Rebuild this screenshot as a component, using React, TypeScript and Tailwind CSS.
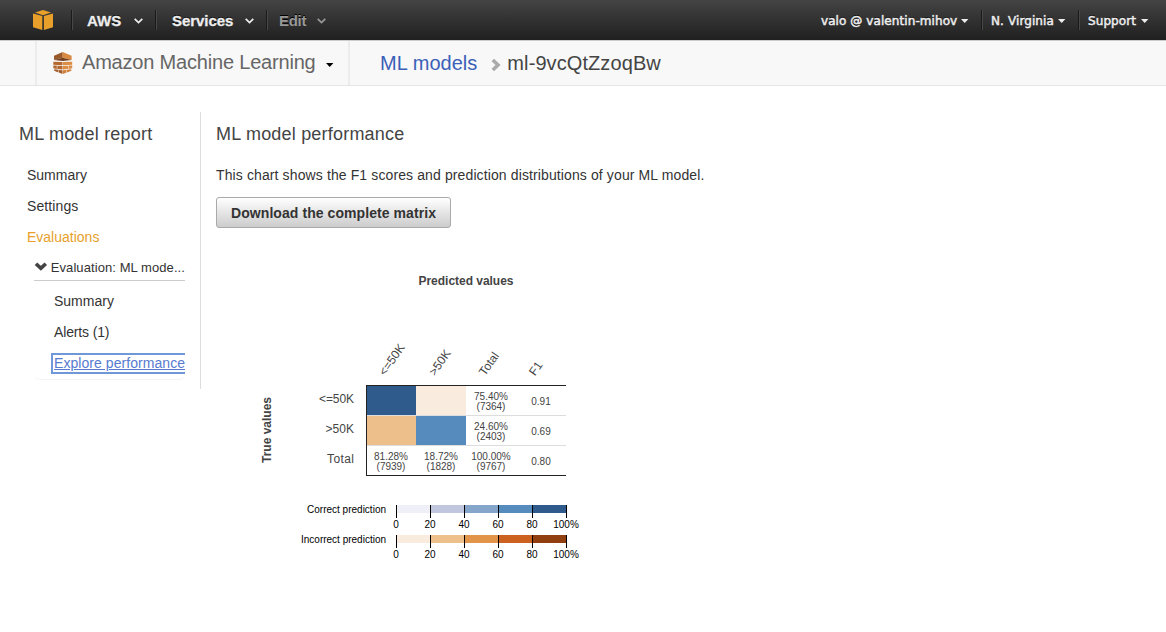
import React from "react";

const Chevron = ({ className }: { className: string }) => (
  <svg className={className} width="9" height="6" viewBox="0 0 9 6" fill="none" stroke="currentColor" strokeWidth="1.7">
    <path d="M0.7 0.8 L4.5 4.5 L8.3 0.8" />
  </svg>
);

const Caret = ({ className }: { className: string }) => (
  <svg className={className} width="8" height="4" viewBox="0 0 8 4" fill="currentColor">
    <path d="M0 0H7.4L3.7 4Z" />
  </svg>
);

const Divider = () => <div className="h-5 w-0.5 shrink-0 border-l border-l-[#1a1a1a] border-r border-r-[#484848]" />;

const CubeLogo = () => (
  <svg width="20" height="20" viewBox="0 0 20 20" fill="#e8a02b" className="shrink-0">
    <path d="M10 0L18 2.5L10 5.2L2 2.5Z" />
    <path d="M0 3.6L9.3 6V20L0 17.3Z" />
    <path d="M20 3.6L10.9 6V20L20 17.3Z" />
  </svg>
);

const LearningLogo = () => (
  <svg width="20" height="22" viewBox="0 0 20 22" className="shrink-0">
    <path d="M9.7 0L1 3.8V8L9.7 5.8Z" fill="#9a592b" />
    <path d="M9.7 0L18.6 3.8V8L9.7 5.8Z" fill="#d98a42" />
    <path d="M1 8L9.7 5.8L18.6 8L9.7 9Z" fill="#74401f" />
    <path d="M0.3 9.7L9.5 10V13.2L0.3 12.8Z" fill="#b4682f" />
    <path d="M19.2 9.7L9.9 10V13.2L19.2 12.8Z" fill="#dc8c43" />
    <path d="M0.3 13.6H3.8V16.9L0.3 16.3ZM4.3 13.7L9.5 14V17.6L4.3 17Z" fill="#b4682f" />
    <path d="M19.2 13.6H15.6V16.9L19.2 16.3ZM15.1 13.7L9.9 14V17.6L15.1 17Z" fill="#dc8c43" />
    <path d="M1.2 17.3L5.4 17.8V20.4L1.2 18.7ZM5.9 17.9L9.5 18.3V22L5.9 20.6Z" fill="#a25a28" />
    <path d="M18.3 17.3L14 17.8V20.4L18.3 18.7ZM13.5 17.9L9.9 18.3V22L13.5 20.6Z" fill="#d07f39" />
  </svg>
);

const columns = ["<=50K", ">50K", "Total", "F1"];

const cells = [
  { x: 391, y: 400, pct: "81.28%", count: "(7939)", row: 2 },
  { x: 441, y: 400, pct: "18.72%", count: "(1828)", row: 2 },
  { x: 491, y: 400, pct: "75.40%", count: "(7364)", row: 0 },
  { x: 491, y: 400, pct: "24.60%", count: "(2403)", row: 1 },
  { x: 491, y: 400, pct: "100.00%", count: "(9767)", row: 2 },
];

const scales = [
  { label: "Correct prediction", x: 307, length: 79, y: 505, colors: ["#efeff7", "#c0c6de", "#86a5cb", "#568bbd", "#2f5a8c"] },
  { label: "Incorrect prediction", x: 301, length: 85, y: 535, colors: ["#f9ecdf", "#edc08b", "#e29549", "#cb601f", "#913f10"] },
];

const ticks = ["0", "20", "40", "60", "80", "100%"];

const Matrix = () => (
  <svg width="360" height="300" viewBox="240 270 360 300" className="block" fill="#444">
    <text x="466" y="285" fontSize="12" fontWeight="bold" textAnchor="middle" textLength="95">Predicted values</text>
    <text transform="translate(271 430) rotate(-90)" fontSize="12" fontWeight="bold" textAnchor="middle" textLength="66">True values</text>
    {columns.map((c, i) => (
      <text key={c} transform={`translate(${385 + i * 50} 376.5) rotate(-55)`} fontSize="12">{c}</text>
    ))}
    {["<=50K", ">50K", "Total"].map((r, i) => (
      <text key={r} x="354" y={403 + i * 30} fontSize="12" textAnchor="end" textLength={[35, 28.5, 27][i]}>{r}</text>
    ))}
    <g shapeRendering="crispEdges">
      <rect x="366" y="386" width="50" height="29" fill="#2f5a8c" />
      <rect x="416" y="386" width="50" height="29" fill="#f9ecdf" />
      <rect x="366" y="416" width="50" height="29" fill="#edc08b" />
      <rect x="416" y="416" width="50" height="29" fill="#568bbd" />
      <rect x="367" y="415" width="199" height="1" fill="#ddd" />
      <rect x="367" y="445" width="199" height="1" fill="#ddd" />
      <rect x="366" y="385" width="200" height="1" fill="#222" />
      <rect x="366" y="475" width="200" height="1" fill="#222" />
      <rect x="366" y="385" width="1" height="91" fill="#222" />
    </g>
    {cells.map((c) => (
      <g key={c.pct} fontSize="10" textAnchor="middle" fill="#444">
        <text x={c.x} y={c.y + c.row * 30}>{c.pct}</text>
        <text x={c.x} y={c.y + 10 + c.row * 30}>{c.count}</text>
      </g>
    ))}
    {["0.91", "0.69", "0.80"].map((v, i) => (
      <text key={v} x="541" y={405 + i * 30} fontSize="10" textAnchor="middle" fill="#444">{v}</text>
    ))}
    {scales.map((s) => (
      <g key={s.label} fontSize="10" fill="#000">
        <text x={s.x} y={s.y + 8} textLength={s.length}>{s.label}</text>
        {s.colors.map((color, i) => (
          <rect key={color} x={396 + i * 34} y={s.y} width="34" height="8" fill={color} />
        ))}
        {ticks.map((t, i) => (
          <g key={t}>
            <rect x={396 + i * 34} y={s.y} width="1" height="13" />
            <text x={396 + i * 34} y={s.y + 23} textAnchor="middle">{t}</text>
          </g>
        ))}
      </g>
    ))}
  </svg>
);

export default function App() {
  return (
    <div className="h-[632px] w-[1166px] overflow-hidden bg-white font-['Liberation_Sans',Arial,sans-serif] text-sm text-[#333]">
      <header className="flex h-10 items-center bg-linear-to-b from-[#444] to-[#202020] text-[15px] font-bold text-[#eee] [text-shadow:0_-1px_0_#000]">
        <div className="flex w-[71px] pl-[33px]"><CubeLogo /></div>
        <Divider />
        <div className="flex w-[82px] items-center justify-between pt-px pr-3 pl-3.5"><span className="[-webkit-text-stroke:0.3px]">AWS</span><Chevron className="mt-px" /></div>
        <Divider />
        <div className="flex w-[109px] items-center justify-between pt-px pr-3 pl-[15px]"><span className="tracking-[-0.05px] [-webkit-text-stroke:0.3px]">Services</span><Chevron className="mt-px" /></div>
        <Divider />
        <div className="flex w-[58px] items-center justify-between pt-px pl-[11px] text-[#999]"><span className="tracking-[-0.3px]">Edit</span><Chevron className="mt-px" /></div>
        <div className="ml-auto flex items-center font-['DejaVu_Sans',Verdana,sans-serif] text-xs font-normal [-webkit-text-stroke:0.5px]">
          <div className="flex w-[160px] items-center justify-between pt-0.5 pr-3"><span className="tracking-[0.08px] whitespace-nowrap">valo @ valentin-mihov</span><Caret className="" /></div>
          <Divider />
          <div className="flex w-[95px] items-center justify-between pt-0.5 pr-3 pl-2"><span className="tracking-[0.1px] whitespace-nowrap">N. Virginia</span><Caret className="" /></div>
          <Divider />
          <div className="flex w-[86px] items-center justify-between pt-0.5 pr-[17px] pl-2"><span className="tracking-[0.08px]">Support</span><Caret className="" /></div>
        </div>
      </header>

      <nav className="flex h-[46px] border-t border-b border-t-[#ccc] border-b-[#e5e5e5] bg-[#f8f8f8] pl-[35px] text-xl leading-[44px]">
        <div className="flex w-[315px] items-center border-x-2 border-[#ececec] pl-4 text-[#666]">
          <LearningLogo />
          <span className="-mt-0.5 ml-[9px] tracking-[-0.19px] whitespace-nowrap">Amazon Machine Learning</span>
          <Caret className="mt-1 ml-[10px] text-black" />
        </div>
        <div className="flex items-center pl-[30px]">
          <a className="tracking-[0.03px] text-[#3b60b8]">ML models</a>
          <svg width="11" height="14" viewBox="0 0 11 14" fill="none" stroke="#aaa" strokeWidth="3.6" className="mt-1 ml-3.5">
            <path d="M1.8 2L7 7L1.8 12" />
          </svg>
          <span className="ml-[5px] tracking-[0.09px] text-[#444]">ml-9vcQtZzoqBw</span>
        </div>
      </nav>

      <div className="flex pt-[26px]">
        <aside className="h-[277px] w-[201px] border-r border-[#ddd] pl-[19px]">
          <h2 className="h-12 text-lg leading-[44px] tracking-[0.2px] text-[#444]">ML model report</h2>
          <ul className="pl-2 leading-[31px]">
            <li>Summary</li>
            <li className="tracking-[0.1px]">Settings</li>
            <li className="text-[#e8a02b]">Evaluations</li>
          </ul>
          <div className="ml-[15px] w-[151px] overflow-hidden rounded-b-md border-b border-[#f4f4f4]">
            <div className="flex h-7 items-center border-b border-[#ccc] pt-[3px] text-[13px]">
              <svg width="14" height="9" viewBox="0 0 14 9" fill="none" stroke="#444" strokeWidth="3.8" className="-mt-1">
                <path d="M2 1.7L7 6.3L12 1.7" />
              </svg>
              <span className="ml-[3px] tracking-[0.08px] whitespace-nowrap">Evaluation: ML mode...</span>
            </div>
            <ul className="pt-[5px] pl-[17px] leading-[31px]">
              <li className="pl-[3px]">Summary</li>
              <li className="pl-[3px] tracking-[-0.15px]">Alerts (1)</li>
              <li className="flex h-[31px] items-center">
                <a className="h-[21px] shrink-0 border-2 border-[#7097d8] pl-px leading-[17px] tracking-[0.06px] whitespace-nowrap text-[#567bd0] underline">Explore performance</a>
              </li>
            </ul>
          </div>
        </aside>

        <main className="pl-[15px]">
          <h2 className="h-12 text-lg leading-[44px] tracking-[0.2px] text-[#444]">ML model performance</h2>
          <p className="leading-[31px] tracking-[0.115px]">This chart shows the F1 scores and prediction distributions of your ML model.</p>
          <button className="mt-1.5 block h-[31px] w-[235px] rounded-[3px] border border-[#aaa] bg-linear-to-b from-white to-[#ccc] font-bold tracking-[0.07px] text-[#333]">Download the complete matrix</button>
          <div className="mt-[42px] ml-6"><Matrix /></div>
        </main>
      </div>
    </div>
  );
}
